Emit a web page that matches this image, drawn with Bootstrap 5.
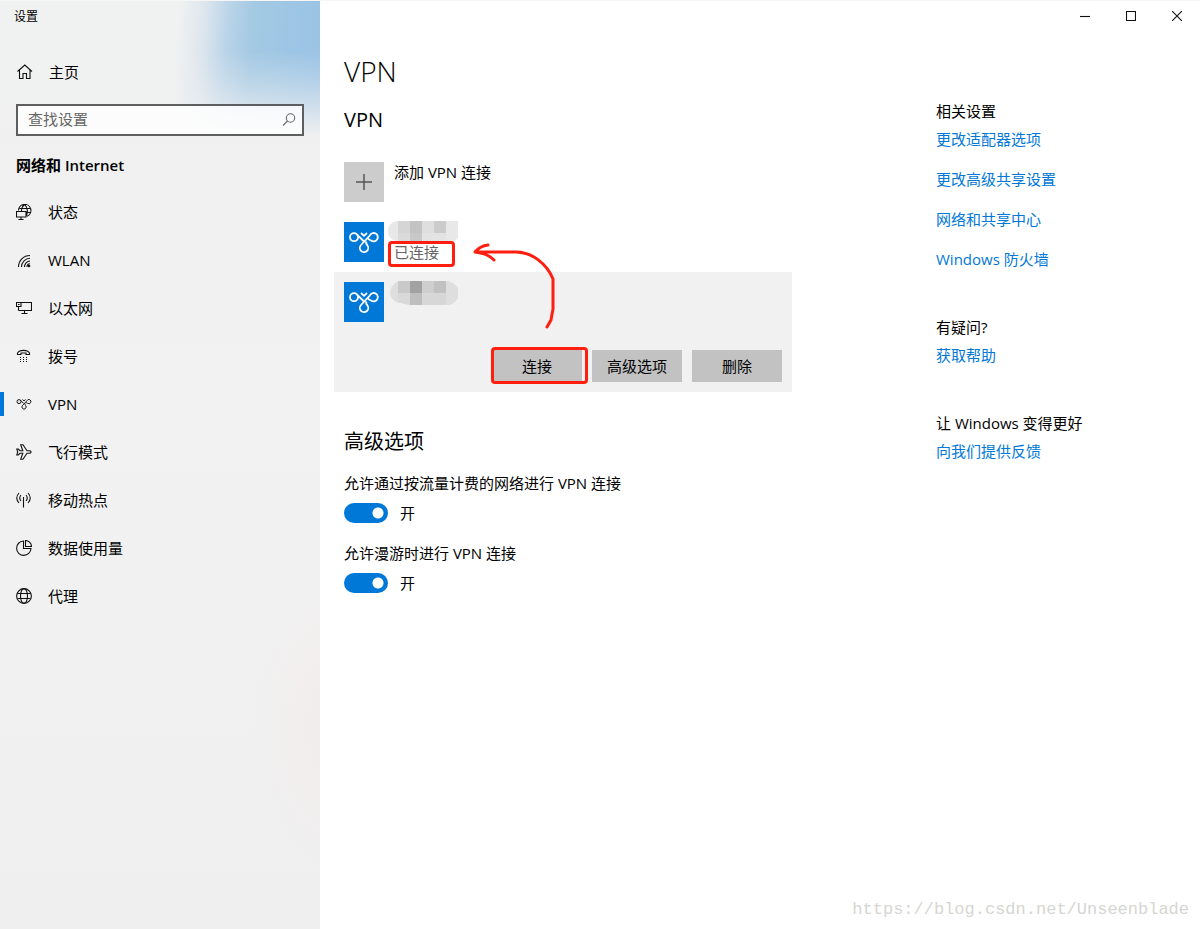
<!DOCTYPE html>
<html lang="zh-CN">
<head>
<meta charset="utf-8">
<meta name="viewport" content="width=device-width, initial-scale=1">
<title>设置</title>
<link href="https://cdn.jsdelivr.net/npm/bootstrap@5.3.0/dist/css/bootstrap.min.css" rel="stylesheet">
<style>
  body { font: 15px/20px "Open Sans", "Noto Sans CJK SC", sans-serif; color: #000; background: #fff; }
  .app { border-top: 1px solid #f6f6f6; }
  svg { display: block; flex: none; }
  .ico { fill: none; stroke: #111; stroke-width: 1.1; }
  .side {
    width: 320px;
    background:
      radial-gradient(ellipse 90px 150px at 340px 720px, rgba(246,232,230,.5), rgba(242,240,240,0)),
      linear-gradient(rgba(240,240,241,0) 50px, rgba(240,240,241,.3) 80px, #f0f0f1 135px, #f2f2f2 400px, #efefef),
      linear-gradient(95deg, #f0f1f1 180px, #dde6ee 205px, #b9d3e8 230px, #a3c9e3 255px, #9ac3e5 320px);
  }
  .caption-text { font-size: 12px; line-height: 31px; padding-left: 14px; }
  .side a { height: 48px; padding-left: 16px; gap: 16px; color: #000; text-decoration: none; }
  .side a.active { position: relative; }
  .side a.active::before { content: ""; position: absolute; left: 0; top: 12px; width: 4px; height: 24px; background: #0078d7; }
  .search { margin: 8px 16px 19px; }
  .search input { height: 32px; border: 2px solid #5c5e60; border-radius: 0; background: rgba(255,255,255,.8); font-size: 15px; line-height: 20px; padding: 3px 32px 5px 10px; }
  .search input::placeholder { color: #666; opacity: 1; }
  .search svg { position: absolute; right: 7px; top: 8px; }
  .side h2 { font-size: 15px; line-height: 20px; font-weight: 600; margin: 0 16px 13px; }
  .winbtn { width: 46px; height: 30px; border: 0; background: none; padding: 0; display: grid; place-items: center; }
  .pane { padding: 20px 24px; gap: 24px; }
  .pane h1 { font-size: 28px; line-height: 40px; font-weight: 300; margin-bottom: 17px; }
  .pane h2 { font-size: 20px; line-height: 24px; font-weight: 400; margin: 0; }
  .vpns { max-width: 458px; margin: 20px 0 38px -10px; }
  .vrow { height: 60px; padding: 10px; gap: 10px; }
  .tile { width: 40px; height: 40px; border: 0; padding: 0; display: grid; place-items: center; flex: none; background: #0078d7; }
  .tile.add { background: #ccc; }
  .picked { background: #f1f1f1; }
  .acts { gap: 10px; padding: 18px 10px 10px; }
  .acts .btn { width: 90px; height: 32px; padding: 0; border: 0; border-radius: 0; background: #c2c2c2; color: #000; font-size: 15px; line-height: 32px; }
  .hl { position: absolute; border: 3px solid #ff1f10; border-radius: 4px; pointer-events: none; }
  .hl-btn { inset: -3px -6px -2px -1px; }
  .hl-state { left: 54px; top: 29px; width: 67px; height: 26px; }
  .state { color: #666; padding-top: 20px; }
  .mosaic { position: absolute; left: 54px; top: 9px; }
  .arrow { position: absolute; left: 134px; top: 70px; pointer-events: none; }
  .opt { margin-top: 19px; }
  .opt .form-check-label { display: block; margin-bottom: 10px; }
  .opt .form-check-input { width: 44px; height: 20px; margin: 0 12px 0 0; float: none; border: 0; border-radius: 10px; background: #0078d7 radial-gradient(circle at 34px 10px, #fff 5px, transparent 6px); }
  .opt .form-switch { height: 20px; }
  .opt + .opt { margin-top: 20px; }
  .help { width: 240px; padding-top: 50px; }
  .help h3 { font-size: 15px; line-height: 20px; font-weight: 400; margin: 0 0 8px; }
  .help a { display: block; color: #0078d7; text-decoration: none; margin-bottom: 20px; }
  .help section { margin-bottom: 48px; }
  .mark-url { font: 17px/20px "Liberation Mono", monospace; color: #d6d6d2; padding: 0 11px 9px; }
</style>
</head>
<body>
<svg width="0" height="0" class="position-absolute" aria-hidden="true">
  <symbol id="vpn" viewBox="0 0 32 24"><circle cx="6" cy="7.200" r="4"/><path d="M8.800 4.300 15.500 11M13 3l3 2.800L19 3M13 15 21.800 5.500A4.200 4.200 0 1 1 23 10.500Q21 9.800 20 8.500M18.500 11.500Q17.500 13.500 19.300 15.200A4.200 4.200 0 1 1 13 15"/></symbol>
</svg>
<div class="app d-flex min-vh-100">
  <aside class="side flex-shrink-0">
    <div class="caption-text">设置</div>
    <a href="#" class="d-flex align-items-center mt-3"><svg class="ico" width="17" height="16" viewBox="0 0 17 16"><path d="M1.500 7.500 8.800 1l7.200 6.500M3.500 6v8.500h3.500v-5h3.500v5H14V6"/></svg>主页</a>
    <div class="search position-relative">
      <input class="form-control" type="text" placeholder="查找设置" aria-label="查找设置">
      <svg width="16" height="16" class="ico" style="stroke:#666"><circle cx="9.500" cy="6" r="4.200"/><path d="M6.500 9 2 13.500"/></svg>
    </div>
    <h2>网络和 Internet</h2>
    <nav>
      <a href="#" class="d-flex align-items-center"><svg class="ico" width="16" height="16"><path d="M2.500 6.500A6.200 6.200 0 1 1 11 12.300M3.500 4.500h10.500M10 8.500h4.500M8.500.5C6.500 2 5.500 4 5.500 7M8.500.5C12 3 12 9 10 12.300M.5 7.500h9.500v5.500H.5zM5 13v2.500M2.500 15.500h5"/></svg>状态</a>
      <a href="#" class="d-flex align-items-center"><svg class="ico" width="16" height="16"><path d="M2.500 15C2.500 8.500 7.500 3.500 14 3.500M5.500 15c0-5 4-8.700 8.500-8.700M8.500 15c0-3.300 2.500-6 5.500-6M11 15c0-2 1-3.200 3-3.200"/><circle cx="13" cy="14" r=".8" fill="#111"/></svg>WLAN</a>
      <a href="#" class="d-flex align-items-center"><svg class="ico" width="16" height="16"><path d="M5 2.500h10.500v8H2.500M.5 2.500H5v4H.5zM2.500 6.500v4M2 4.500h1.500M8.500 10.500v3M5.500 13.500h6"/></svg>以太网</a>
      <a href="#" class="d-flex align-items-center"><svg class="ico" width="16" height="16"><path d="M1.500 6.500V5C3.500 1.500 11.500 1.500 13.500 5v1.500h-3.500V5H5v1.500z"/><path stroke-dasharray="1 2" d="M4 9.500h7M4 11.500h7M4 13.500h7"/></svg>拨号</a>
      <a href="#" class="d-flex align-items-center active" aria-current="page"><svg class="ico" width="16" height="12" style="stroke-width:2"><use href="#vpn"/></svg>VPN</a>
      <a href="#" class="d-flex align-items-center"><svg class="ico" width="16" height="16"><path d="M.8 5h1.500L4 6.700H6.800L4.700.8H7l4 5.900h2.800q2.600 1.300 0 2.600H11l-4 5.900H4.700L6.800 9.300H4L2.300 11H.8L1.700 8z"/></svg>飞行模式</a>
      <a href="#" class="d-flex align-items-center"><svg class="ico" width="16" height="16"><path d="M7.500 5v10.500M5 3q-2.500 3 0 6M10 3q2.500 3 0 6M3 1Q-1.500 6 3 11M12 1Q16.500 6 12 11"/></svg>移动热点</a>
      <a href="#" class="d-flex align-items-center"><svg class="ico" width="16" height="16"><path d="M7.500 1A7.200 7.200 0 1 0 15 8.500H7.500zM9.500.5v6h6c0-3-2.500-6-6-6z"/></svg>数据使用量</a>
      <a href="#" class="d-flex align-items-center"><svg class="ico" width="16" height="16"><circle cx="8" cy="8" r="7.400"/><ellipse cx="8" cy="8" rx="3.500" ry="7.400"/><path d="M1.500 5.500h13M1.500 10.500h13"/></svg>代理</a>
    </nav>
  </aside>

  <div class="d-flex flex-column flex-grow-1">
    <div class="d-flex justify-content-end">
      <button class="winbtn" aria-label="最小化"><svg class="ico" width="10" height="10"><path d="M0 5.500h10"/></svg></button>
      <button class="winbtn" aria-label="最大化"><svg class="ico" width="10" height="10"><path d="M.5.5h9v9h-9z"/></svg></button>
      <button class="winbtn" aria-label="关闭"><svg class="ico" width="10" height="10"><path d="m0 0 10 10M10 0 0 10"/></svg></button>
    </div>
    <div class="pane d-flex flex-grow-1">
      <main class="flex-grow-1">
        <h1>VPN</h1>
        <h2>VPN</h2>
        <div class="vpns position-relative">
          <div class="vrow d-flex">
            <button class="tile add" id="add" aria-label="添加 VPN 连接"><svg width="16" height="16" fill="none" stroke="#555" stroke-width="1.500"><path d="M0 8h16M8 0v16"/></svg></button>
            <label for="add">添加 VPN 连接</label>
          </div>
          <div class="vrow d-flex position-relative">
            <div class="tile"><svg width="32" height="24" fill="none" stroke="#fff" stroke-width="1.800"><use href="#vpn"/></svg></div>
            <div class="state">已连接</div>
            <svg class="mosaic" width="70" height="20"><clipPath id="c1"><path d="M8 0h62v16q-1 4-6 4H7Q0 17 0 10 0 2 8 0z"/></clipPath><g clip-path="url(#c1)"><path fill="#e8e8e8" d="M0 0h70v20H0z"/><path fill="#d5d5d5" d="M10 0h12v12H10z"/><path fill="#c3c3c3" d="M22 0h12v12H22z"/><path fill="#dfdfdf" d="M34 0h12v12H34z"/><path fill="#cbcbcb" d="M46 0h12v12H46z"/><path fill="#dadada" d="M10 12h12v8H10z"/><path fill="#c8c8c8" d="M22 12h12v8H22z"/><path fill="#e3e3e3" d="M34 12h24v8H34z"/></g></svg>
            <span class="hl hl-state"></span>
          </div>
          <div class="picked">
            <div class="vrow d-flex position-relative">
              <div class="tile"><svg width="32" height="24" fill="none" stroke="#fff" stroke-width="1.800"><use href="#vpn"/></svg></div>
              <svg class="mosaic" width="70" height="24"><clipPath id="c2"><path d="M12 0h48q7 2 10 7v10q-3 5-8 7H22L8 21Q2 17 2 11 4 1 12 0z"/></clipPath><g clip-path="url(#c2)"><path fill="#dedede" d="M0 0h70v24H0z"/><path fill="#c9c9c9" d="M10 0h12v12H10z"/><path fill="#a2a2a2" d="M22 0h12v12H22z"/><path fill="#cecece" d="M34 0h12v12H34z"/><path fill="#c1c1c1" d="M46 0h12v12H46z"/><path fill="#d9d9d9" d="M10 12h12v12H10z"/><path fill="#bebebe" d="M22 12h12v12H22z"/><path fill="#d7d7d7" d="M34 12h24v12H34z"/></g></svg>
            </div>
            <div class="acts d-flex justify-content-end">
              <div class="position-relative"><button class="btn">连接</button><span class="hl hl-btn"></span></div>
              <button class="btn">高级选项</button>
              <button class="btn">删除</button>
            </div>
          </div>
          <svg class="arrow" width="96" height="110" fill="none" stroke="#ff1f10" stroke-width="3" stroke-linecap="round" stroke-linejoin="round"><path d="M20 23Q12 24 7 30H48C64 30 79 42 85 57V87L83 98 79 105M7 30Q19 31 26 38"/></svg>
        </div>
        <h2>高级选项</h2>
        <div class="opt">
          <label class="form-check-label" for="metered">允许通过按流量计费的网络进行 VPN 连接</label>
          <div class="form-switch p-0 m-0 d-flex"><input class="form-check-input" type="checkbox" role="switch" id="metered" checked><span>开</span></div>
        </div>
        <div class="opt">
          <label class="form-check-label" for="roaming">允许漫游时进行 VPN 连接</label>
          <div class="form-switch p-0 m-0 d-flex"><input class="form-check-input" type="checkbox" role="switch" id="roaming" checked><span>开</span></div>
        </div>
      </main>
      <aside class="help flex-shrink-0">
        <section>
          <h3>相关设置</h3>
          <a href="#">更改适配器选项</a>
          <a href="#">更改高级共享设置</a>
          <a href="#">网络和共享中心</a>
          <a href="#">Windows 防火墙</a>
        </section>
        <section>
          <h3>有疑问?</h3>
          <a href="#">获取帮助</a>
        </section>
        <section>
          <h3>让 Windows 变得更好</h3>
          <a href="#">向我们提供反馈</a>
        </section>
      </aside>
    </div>
    <div class="mark-url text-end">https://blog.csdn.net/Unseenblade</div>
  </div>
</div>
<script src="https://cdn.jsdelivr.net/npm/bootstrap@5.3.0/dist/js/bootstrap.bundle.min.js"></script>
</body>
</html>
